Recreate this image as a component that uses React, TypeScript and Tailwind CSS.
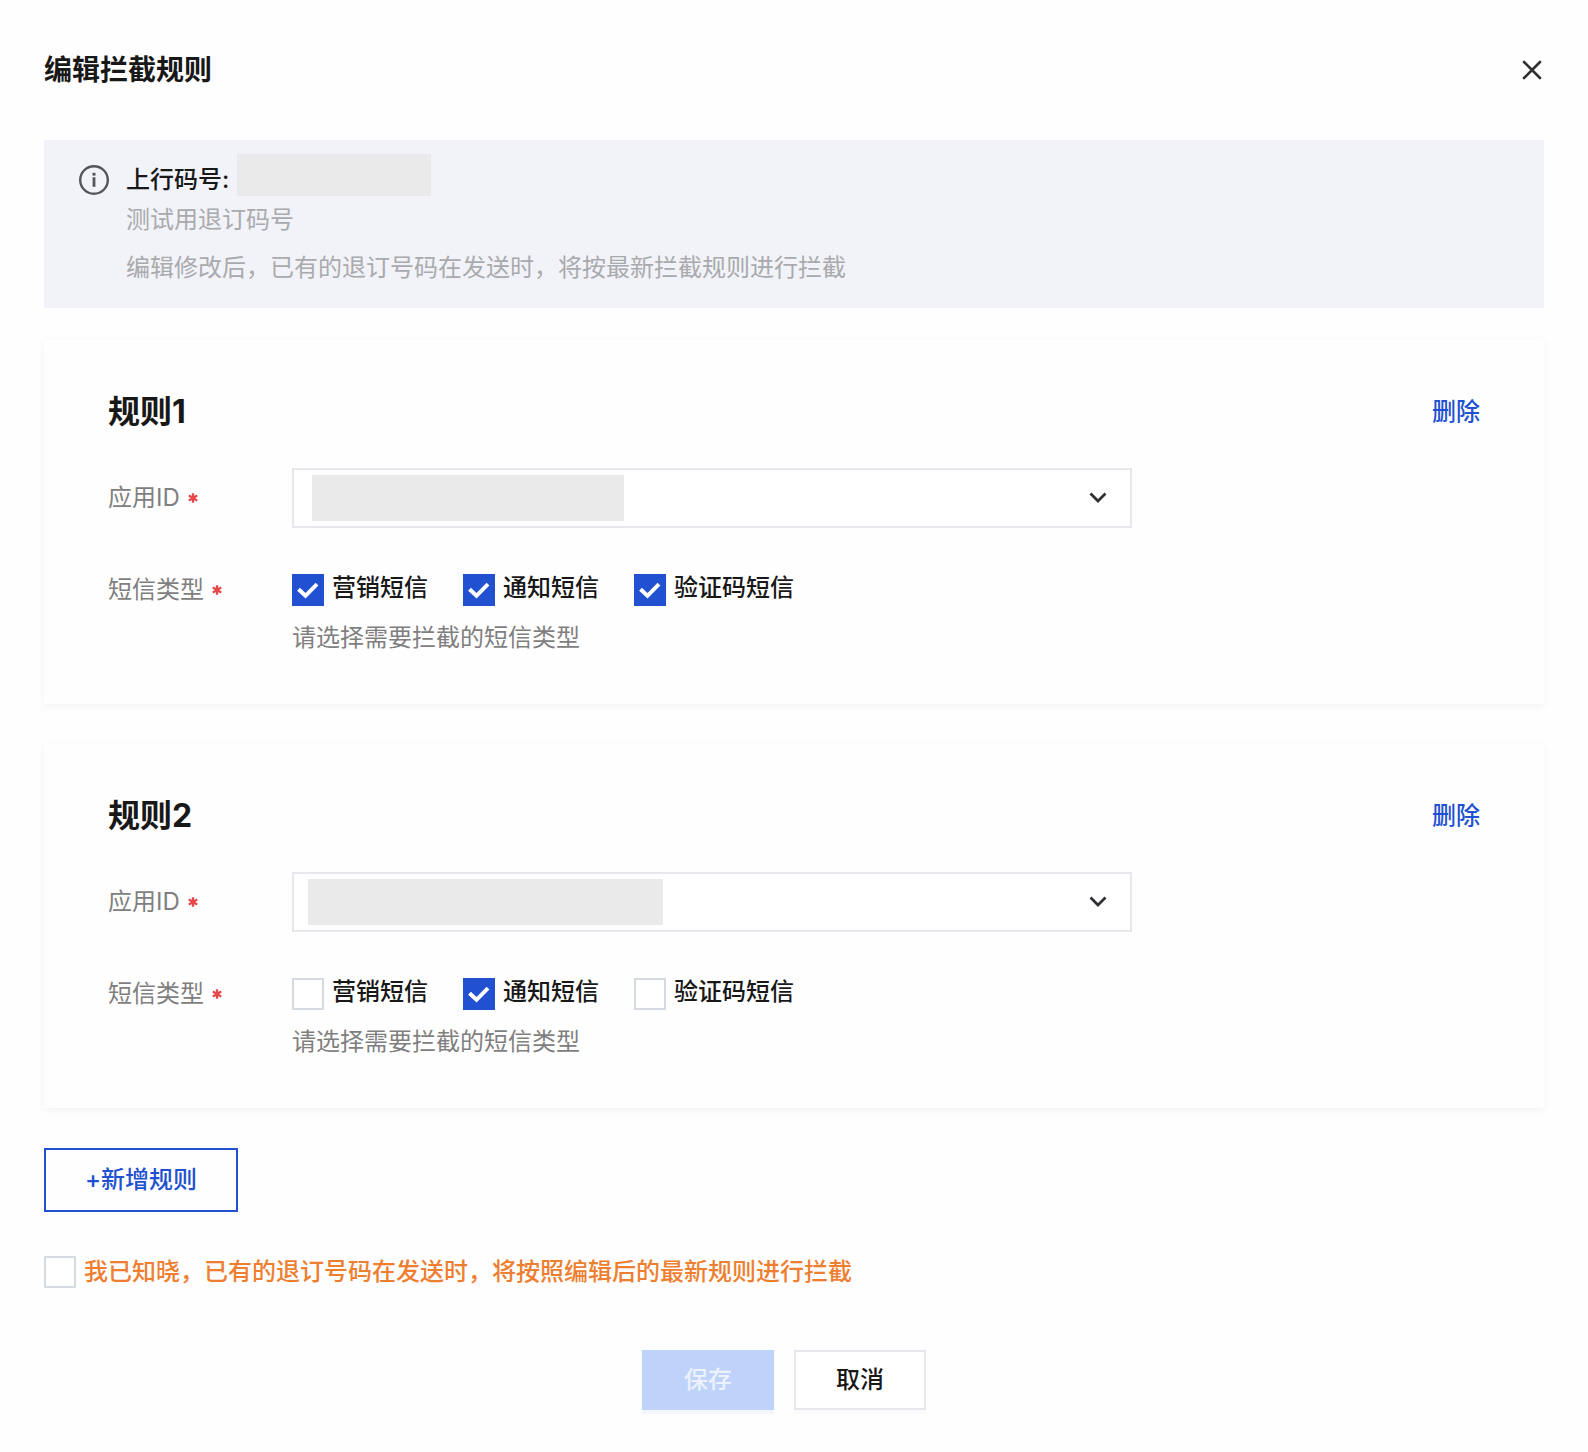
import React, { useState } from "react";
import clsx from "clsx";

const SMS_TYPES = ["营销短信", "通知短信", "验证码短信"];

const RULES = [
  { id: 1, types: ["营销短信", "通知短信", "验证码短信"], mask: "left-5 w-[312px]" },
  { id: 2, types: ["通知短信"], mask: "left-4 w-[355px]" },
];

function Checkbox({
  label,
  defaultChecked = false,
  className,
}: {
  label: string;
  defaultChecked?: boolean;
  className?: string;
}) {
  const [checked, setChecked] = useState(defaultChecked);

  return (
    <label className={clsx("flex items-start gap-2 font-medium cursor-pointer", className)}>
      <span className="relative w-8 h-8 shrink-0">
        <input
          type="checkbox"
          checked={checked}
          onChange={(e) => setChecked(e.target.checked)}
          className="block w-8 h-8 appearance-none border-2 border-[#d5dae1] bg-white checked:border-[#2151d1] checked:bg-[#2151d1]"
        />
        {checked && (
          <svg
            viewBox="0 0 32 32"
            className="absolute inset-0 w-8 h-8 pointer-events-none"
            fill="none"
            stroke="white"
            strokeWidth="4"
          >
            <path d="M6.5 15.2 13.5 21.8 25 10.2" />
          </svg>
        )}
      </span>
      <span>{label}</span>
    </label>
  );
}

function Required() {
  return (
    <svg viewBox="0 0 10 10" className="w-[10px] h-[10px]" stroke="#e5484a" strokeWidth="2.3">
      <path d="M5 0.2V9.8M0.8 2.6 9.2 7.4M9.2 2.6 0.8 7.4" />
    </svg>
  );
}

function RuleCard({ id, types, mask }: { id: number; types: string[]; mask: string }) {
  return (
    <section className="px-16 pt-12 pb-[50px] shadow-[0_2px_8px_rgba(0,0,0,0.05)]">
      <div className="flex items-center justify-between">
        <h2 className="text-[32px] leading-12 font-bold">规则{id}</h2>
        <button type="button" className="font-medium text-[#2151d1]">
          删除
        </button>
      </div>

      <div className="flex items-center mt-8">
        <label
          htmlFor={`app-${id}`}
          className="flex items-center gap-2 w-46 shrink-0 text-[#7f7f7f]"
        >
          应用ID
          <Required />
        </label>
        <div className="relative w-full max-w-[840px]">
          <select
            id={`app-${id}`}
            className="block w-full h-15 px-5 appearance-none border-2 border-[#e7e8ee] bg-white"
          >
            <option value=""></option>
          </select>
          <span
            className={clsx("absolute top-[7px] h-[46px] bg-[#eaeaea] pointer-events-none", mask)}
          />
          <svg
            viewBox="0 0 20 20"
            className="absolute right-6 top-5 w-5 h-5 pointer-events-none"
            fill="none"
            stroke="#2f3033"
            strokeWidth="2.8"
          >
            <path d="M2.5 5.5 10 13 17.5 5.5" />
          </svg>
        </div>
      </div>

      <div className="flex mt-11">
        <div className="flex items-center gap-2 w-46 h-9 shrink-0 text-[#7f7f7f]">
          短信类型
          <Required />
        </div>
        <div>
          <div className="flex gap-[35px] pt-[2px]">
            {SMS_TYPES.map((type) => (
              <Checkbox
                key={type}
                label={type}
                defaultChecked={types.includes(type)}
                className="leading-7"
              />
            ))}
          </div>
          <p className="mt-4 leading-8 text-[#7f7f7f]">请选择需要拦截的短信类型</p>
        </div>
      </div>
    </section>
  );
}

export default function App() {
  return (
    <div className="min-h-screen px-11 pt-12 pb-10 bg-[#fefefe] font-['Inter','Noto_Sans_CJK_SC',sans-serif] text-2xl leading-9 text-[#181818]">
      <header className="flex items-center justify-between h-11">
        <h1 className="text-[28px] font-bold">编辑拦截规则</h1>
        <button type="button" aria-label="关闭" className="w-6 h-6">
          <svg viewBox="0 0 24 24" fill="none" stroke="#2f3033" strokeWidth="2.6" strokeLinecap="round">
            <path d="M4 4 20 20M20 4 4 20" />
          </svg>
        </button>
      </header>

      <div className="flex gap-4 mt-12 pl-[34px] pt-[14px] pb-[22px] bg-[#f2f3f8]">
        <svg viewBox="0 0 32 32" className="w-8 h-8 mt-[10px] shrink-0" fill="none" stroke="#55565a">
          <circle cx="16" cy="16" r="13.8" strokeWidth="2.4" />
          <path d="M16 13.2V22.8" strokeWidth="2.8" />
          <path d="M16 8.8V11.6" strokeWidth="3" />
        </svg>
        <div>
          <div className="flex items-start h-12">
            <span className="pt-2 font-medium">上行码号:</span>
            <span className="w-[194px] h-[42px] ml-2 bg-[#eaeaea]" />
          </div>
          <p className="text-[#a9aaad]">测试用退订码号</p>
          <p className="mt-3 text-[#a9aaad]">
            编辑修改后，已有的退订号码在发送时，将按最新拦截规则进行拦截
          </p>
        </div>
      </div>

      <main className="flex flex-col gap-10 mt-8">
        {RULES.map((rule) => (
          <RuleCard key={rule.id} {...rule} />
        ))}
      </main>

      <button
        type="button"
        className="block h-16 px-[39px] mt-10 border-2 border-[#2151d1] font-medium text-[#2151d1]"
      >
        +新增规则
      </button>

      <Checkbox
        label="我已知晓，已有的退订号码在发送时，将按照编辑后的最新规则进行拦截"
        className="mt-11 leading-8 text-[#ee7f31]"
      />

      <footer className="flex justify-center gap-5 mt-[62px] pr-5">
        <button
          type="button"
          disabled
          className="w-33 h-15 bg-[#bfd2f9] font-medium text-[#ecf2fe] shadow-[0_4px_0_#f5f7fe]"
        >
          保存
        </button>
        <button
          type="button"
          className="w-33 h-15 border-2 border-[#e7e8ee] bg-white font-medium shadow-[0_4px_0_#fbfbfb]"
        >
          取消
        </button>
      </footer>
    </div>
  );
}
